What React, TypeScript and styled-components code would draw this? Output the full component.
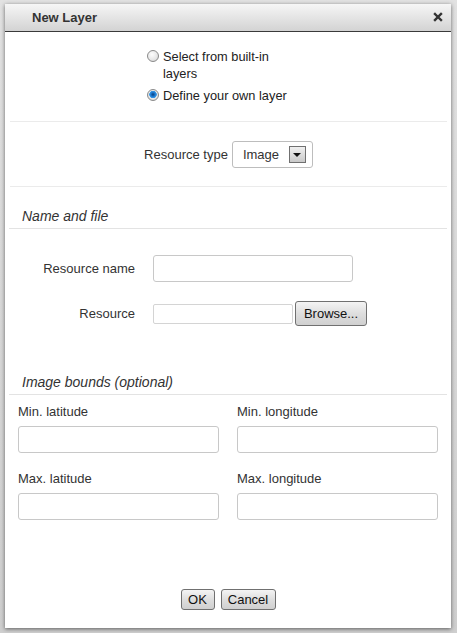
import React from 'react';
import styled, { createGlobalStyle } from 'styled-components';

const GlobalStyle = createGlobalStyle`
  html, body {
    margin: 0;
    padding: 0;
    background: #d6d6d6;
    font-family: "Liberation Sans", Arial, sans-serif;
  }
  * {
    box-sizing: border-box;
  }
`;

const Page = styled.div`
  width: 457px;
  height: 633px;
  padding: 4px 0 0 5px;
  background: linear-gradient(to bottom, #e2e2e2, #cfcfcf);
  overflow: hidden;
`;

const Dialog = styled.div`
  width: 446px;
  height: 624px;
  display: flex;
  flex-direction: column;
  background: #fff;
  box-shadow: 0 1px 4px rgba(0, 0, 0, 0.55);
`;

const TitleBar = styled.div`
  height: 28px;
  display: flex;
  align-items: center;
  justify-content: space-between;
  padding: 0 8px 1px 27px;
  background: linear-gradient(to bottom, #f6f6f6, #d3d3d3);
  border-bottom: 1px solid #3a3a3a;
`;

const Title = styled.span`
  font-size: 13px;
  font-weight: bold;
  color: #333;
`;

const CloseIcon = () => (
  <svg width="10" height="10" viewBox="0 0 10 10">
    <path d="M2 2 L8 8 M8 2 L2 8" stroke="#333" strokeWidth="2.4" strokeLinecap="square" />
  </svg>
);

const Section = styled.div`
  margin: 0 4px 0 5px;
  border-bottom: 1px solid #ebebeb;
`;

const RadioSection = styled(Section)`
  padding: 16px 0 17px 137px;
  display: flex;
  flex-direction: column;
  gap: 5px;
`;

const RadioRow = styled.label`
  display: flex;
  align-items: flex-start;
  gap: 4px;
  font-size: 12.8px;
  line-height: 17px;
  color: #222;
`;

const RadioDot = styled.span<{ $checked?: boolean }>`
  flex: none;
  width: 12px;
  height: 12px;
  margin-top: 2px;
  border-radius: 50%;
  border: 1px solid #8a8a8a;
  background: ${p =>
    p.$checked
      ? 'radial-gradient(circle at 50% 45%, #0a3e7a 0, #1a73c9 2px, #3b9be8 3.5px, #e9e9e9 4px, #cfcfcf 100%)'
      : 'radial-gradient(circle at 40% 35%, #fdfdfd 0, #e6e6e6 60%, #cacaca 100%)'};
`;

const RadioText = styled.span`
  width: 130px;
`;

const TypeSection = styled(Section)`
  padding: 19px 0 18px;
  display: flex;
  justify-content: center;
  align-items: center;
  gap: 4px;
`;

const Label = styled.span`
  font-size: 13px;
  color: #333;
`;

const Select = styled.div`
  width: 81px;
  height: 27px;
  display: flex;
  align-items: center;
  justify-content: space-between;
  padding: 0 6px 0 10px;
  border: 1px solid #bdbdbd;
  border-radius: 3px;
  font-size: 13px;
  color: #333;
`;

const SelectArrow = styled.span`
  width: 17px;
  height: 17px;
  display: flex;
  align-items: center;
  justify-content: center;
  border: 1px solid #707070;
  background: linear-gradient(to bottom, #f0f0f0, #c9c9c9);
  &::after {
    content: '';
    border-left: 4px solid transparent;
    border-right: 4px solid transparent;
    border-top: 4px solid #111;
    margin-top: 1px;
  }
`;

const Heading = styled.div`
  margin: 0 4px 0 4px;
  padding: 21px 0 4px 13px;
  border-bottom: 1px solid #e3e3e3;
  font-size: 14px;
  line-height: 16px;
  font-style: italic;
  color: #333;
`;

const FileForm = styled.div`
  padding: 26px 0 27px;
  display: grid;
  grid-template-columns: 130px auto;
  column-gap: 18px;
  row-gap: 19px;
  align-items: center;
`;

const RowLabel = styled(Label)`
  text-align: right;
`;

const TextInput = styled.div<{ $width?: number }>`
  width: ${p => (p.$width ? `${p.$width}px` : '100%')};
  height: 27px;
  border: 1px solid #c8c8c8;
  border-radius: 3px;
  background: #fff;
`;

const FileRow = styled.div`
  display: flex;
  align-items: center;
  gap: 2px;
`;

const FileBox = styled.div`
  width: 140px;
  height: 20px;
  border: 1px solid #d4d4d4;
  border-radius: 2px;
`;

const Button = styled.button<{ $width: number; $height: number }>`
  width: ${p => p.$width}px;
  height: ${p => p.$height}px;
  padding: 0;
  border: 1px solid #707070;
  border-radius: 3px;
  background: linear-gradient(to bottom, #f4f4f4, #dedede 50%, #d0d0d0);
  font-family: "Liberation Sans", Arial, sans-serif;
  font-size: 13px;
  color: #111;
`;

const BoundsGrid = styled.div`
  padding: 9px 13px 0;
  display: grid;
  grid-template-columns: 1fr 1fr;
  column-gap: 18px;
  row-gap: 18px;
`;

const Field = styled.div`
  display: flex;
  flex-direction: column;
  gap: 6px;
  font-size: 13px;
  line-height: 16px;
  color: #333;
`;

const Footer = styled.div`
  margin-top: auto;
  padding-bottom: 18px;
  display: flex;
  justify-content: center;
  gap: 6px;
`;

const bounds = ['Min. latitude', 'Min. longitude', 'Max. latitude', 'Max. longitude'];

const App: React.FC = () => {
  return (
    <>
      <GlobalStyle />
      <Page>
        <Dialog>
          <TitleBar>
            <Title>New Layer</Title>
            <CloseIcon />
          </TitleBar>

          <RadioSection>
            <RadioRow>
              <RadioDot />
              <RadioText>Select from built-in layers</RadioText>
            </RadioRow>
            <RadioRow>
              <RadioDot $checked />
              <RadioText>Define your own layer</RadioText>
            </RadioRow>
          </RadioSection>

          <TypeSection>
            <Label>Resource type</Label>
            <Select>
              Image
              <SelectArrow />
            </Select>
          </TypeSection>

          <Heading>Name and file</Heading>
          <FileForm>
            <RowLabel>Resource name</RowLabel>
            <TextInput $width={200} />
            <RowLabel>Resource</RowLabel>
            <FileRow>
              <FileBox />
              <Button $width={72} $height={25}>Browse...</Button>
            </FileRow>
          </FileForm>

          <Heading>Image bounds (optional)</Heading>
          <BoundsGrid>
            {bounds.map(b => (
              <Field key={b}>
                {b}
                <TextInput />
              </Field>
            ))}
          </BoundsGrid>

          <Footer>
            <Button $width={34} $height={21}>OK</Button>
            <Button $width={55} $height={21}>Cancel</Button>
          </Footer>
        </Dialog>
      </Page>
    </>
  );
};

export default App;
